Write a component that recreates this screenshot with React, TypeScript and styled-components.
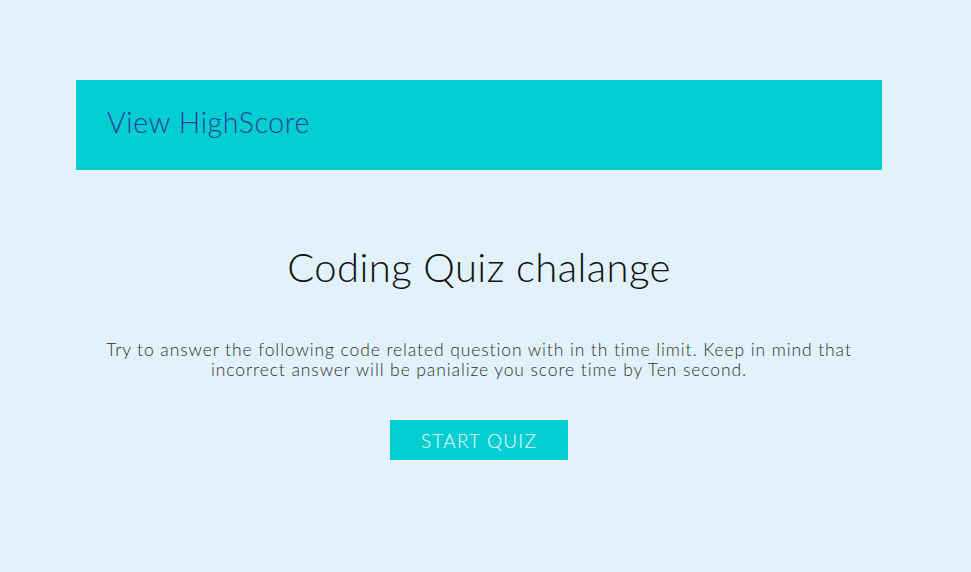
import React from "react";
import styled, { createGlobalStyle } from "styled-components";

const Global = createGlobalStyle`
  html, body { margin: 0; padding: 0; background: #e1f2fd; }
  body { font-family: "Lato", "Open Sans", sans-serif; font-weight: 300; }
`;

const Page = styled.div`
  width: 958px;
  padding-top: 80px;
  display: flex;
  flex-direction: column;
  align-items: center;
`;

const Header = styled.header`
  width: 806px;
  height: 90px;
  background: #00ced1;
  display: flex;
  align-items: center;
  padding-left: 31px;
  padding-bottom: 7px;
  box-sizing: border-box;
`;

const HeaderLink = styled.a`
  color: #2e3d9a;
  font-size: 28.5px;
  font-weight: 300;
  letter-spacing: 0.6px;
  text-decoration: none;
  cursor: pointer;
`;

const Main = styled.main`
  display: flex;
  flex-direction: column;
  align-items: center;
  text-align: center;
`;

const Title = styled.h1`
  margin: 73px 0 0;
  font-size: 40px;
  font-weight: 300;
  letter-spacing: 0.4px;
  color: #111;
  line-height: 48px;
`;

const Intro = styled.p`
  margin: 49px 0 0;
  width: 800px;
  font-size: 17.5px;
  line-height: 20px;
  letter-spacing: 0.9px;
  color: #2f2f2f;
  font-weight: 300;
`;

const StartButton = styled.button`
  margin-top: 40px;
  width: 178px;
  height: 40px;
  border: none;
  background: #00ced1;
  color: #f3fbfd;
  font-family: inherit;
  font-size: 19px;
  font-weight: 300;
  letter-spacing: 1.2px;
  cursor: pointer;
`;

export default function App() {
  return (
    <>
      <Global />
      <Page>
        <Header>
          <HeaderLink>View HighScore</HeaderLink>
        </Header>
        <Main>
          <Title>Coding Quiz chalange</Title>
          <Intro>
            Try to answer the following code related question with in th time limit. Keep in mind that
            <br />
            incorrect answer will be panialize you score time by Ten second.
          </Intro>
          <StartButton>START QUIZ</StartButton>
        </Main>
      </Page>
    </>
  );
}
